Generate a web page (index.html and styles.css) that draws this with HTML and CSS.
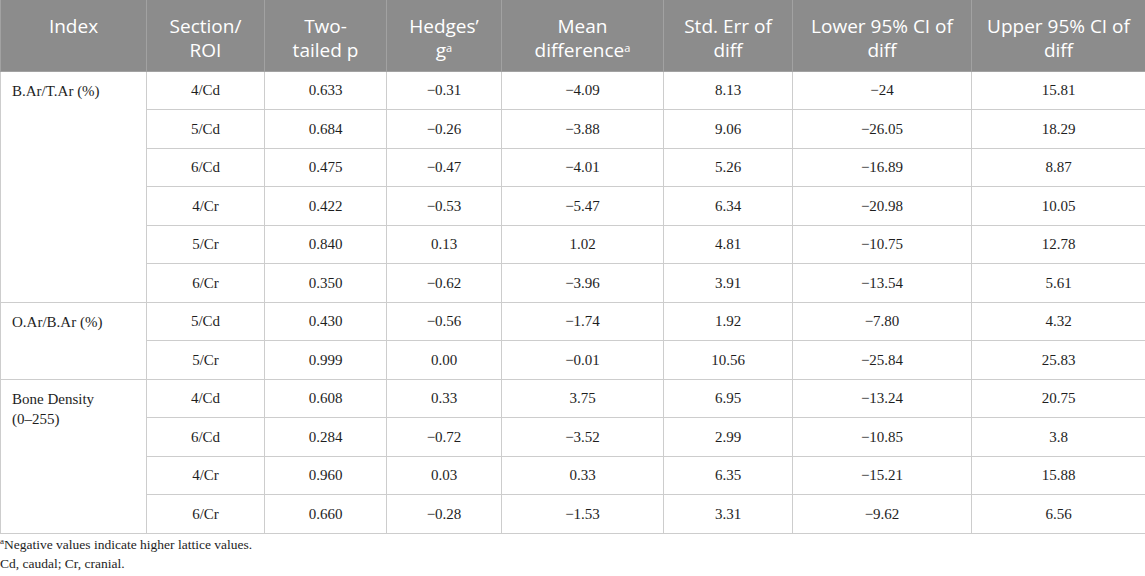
FILE: index.html
```html
<!DOCTYPE html>
<html lang="en">
<head>
  <meta charset="UTF-8" />
  <title>Table</title>
  <link rel="stylesheet" href="styles.css">
</head>
<body>
  <table class="stats">
    <colgroup>
      <col class="c-index">
      <col class="c-section">
      <col class="c-p">
      <col class="c-g">
      <col class="c-mean">
      <col class="c-err">
      <col class="c-lower">
      <col class="c-upper">
    </colgroup>
    <thead>
      <tr>
        <th>Index</th>
        <th>Section/<br>ROI</th>
        <th>Two-<br>tailed p</th>
        <th>Hedges’<br>g<sup>a</sup></th>
        <th>Mean<br>difference<sup>a</sup></th>
        <th>Std. Err of<br>diff</th>
        <th>Lower 95% CI of<br>diff</th>
        <th>Upper 95% CI of<br>diff</th>
      </tr>
    </thead>
    <tbody>
      <tr>
        <td class="label" rowspan="6">B.Ar/T.Ar (%)</td>
        <td>4/Cd</td><td>0.633</td><td>−0.31</td><td>−4.09</td><td>8.13</td><td>−24</td><td>15.81</td>
      </tr>
      <tr><td>5/Cd</td><td>0.684</td><td>−0.26</td><td>−3.88</td><td>9.06</td><td>−26.05</td><td>18.29</td></tr>
      <tr><td>6/Cd</td><td>0.475</td><td>−0.47</td><td>−4.01</td><td>5.26</td><td>−16.89</td><td>8.87</td></tr>
      <tr><td>4/Cr</td><td>0.422</td><td>−0.53</td><td>−5.47</td><td>6.34</td><td>−20.98</td><td>10.05</td></tr>
      <tr><td>5/Cr</td><td>0.840</td><td>0.13</td><td>1.02</td><td>4.81</td><td>−10.75</td><td>12.78</td></tr>
      <tr><td>6/Cr</td><td>0.350</td><td>−0.62</td><td>−3.96</td><td>3.91</td><td>−13.54</td><td>5.61</td></tr>
      <tr>
        <td class="label" rowspan="2">O.Ar/B.Ar (%)</td>
        <td>5/Cd</td><td>0.430</td><td>−0.56</td><td>−1.74</td><td>1.92</td><td>−7.80</td><td>4.32</td>
      </tr>
      <tr><td>5/Cr</td><td>0.999</td><td>0.00</td><td>−0.01</td><td>10.56</td><td>−25.84</td><td>25.83</td></tr>
      <tr>
        <td class="label" rowspan="4">Bone Density <span class="nowrap">(0–255)</span></td>
        <td>4/Cd</td><td>0.608</td><td>0.33</td><td>3.75</td><td>6.95</td><td>−13.24</td><td>20.75</td>
      </tr>
      <tr><td>6/Cd</td><td>0.284</td><td>−0.72</td><td>−3.52</td><td>2.99</td><td>−10.85</td><td>3.8</td></tr>
      <tr><td>4/Cr</td><td>0.960</td><td>0.03</td><td>0.33</td><td>6.35</td><td>−15.21</td><td>15.88</td></tr>
      <tr><td>6/Cr</td><td>0.660</td><td>−0.28</td><td>−1.53</td><td>3.31</td><td>−9.62</td><td>6.56</td></tr>
    </tbody>
  </table>

  <div class="notes">
    <p><sup>a</sup>Negative values indicate higher lattice values.</p>
    <p>Cd, caudal; Cr, cranial.</p>
  </div>
</body>
</html>
```

FILE: styles.css
```css
* {
  margin: 0;
  padding: 0;
  box-sizing: border-box;
}

body {
  background: white;
  color: #1e1e1e;
  font-family: 'Liberation Serif', serif;
}

.stats {
  width: 1145px;
  border-collapse: collapse;
  table-layout: fixed;
}

.c-index { width: 146px; }
.c-section { width: 118px; }
.c-p { width: 122px; }
.c-g { width: 115px; }
.c-mean { width: 162px; }
.c-err { width: 129px; }
.c-lower { width: 179px; }
.c-upper { width: 174px; }

.stats th {
  height: 71px;
  background: #8c8c8c;
  color: white;
  font-family: 'Open Sans', sans-serif;
  font-weight: normal;
  font-size: 19px;
  line-height: 24px;
  text-align: center;
  vertical-align: top;
  padding: 14px 4px 0;
  border: 1px solid #a2a2a2;
  border-top: none;
}

.stats th sup {
  font-size: 11px;
  line-height: 0;
  vertical-align: 5px;
}

.stats td {
  height: 38.5px;
  font-size: 15px;
  line-height: 20px;
  text-align: center;
  vertical-align: middle;
  border: 1px solid #cdcdcd;
  padding: 0 8px;
}

.stats td.label {
  text-align: left;
  vertical-align: top;
  padding: 9px 11px 0;
}

.nowrap {
  white-space: nowrap;
}

.notes {
  padding-top: 1px;
  font-size: 13.5px;
  line-height: 19px;
}

.notes sup {
  font-size: 9px;
  line-height: 0;
  vertical-align: 5px;
}
```
